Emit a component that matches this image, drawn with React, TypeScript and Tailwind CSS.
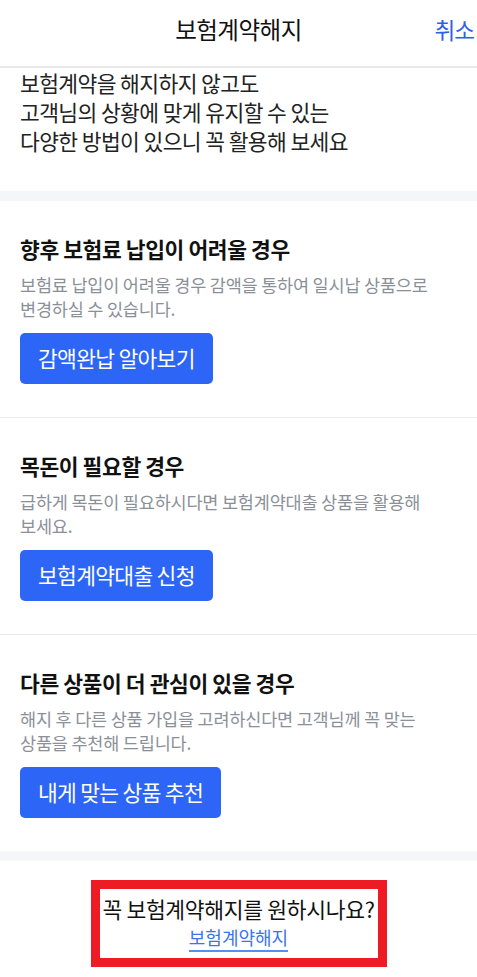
const font = { fontFamily: '"Noto Sans CJK KR", "Noto Sans", sans-serif' };

type Option = {
  title: string;
  lines: string[];
  button: string;
};

const options: Option[] = [
  {
    title: '향후 보험료 납입이 어려울 경우',
    lines: ['보험료 납입이 어려울 경우 감액을 통하여 일시납 상품으로', '변경하실 수 있습니다.'],
    button: '감액완납 알아보기',
  },
  {
    title: '목돈이 필요할 경우',
    lines: ['급하게 목돈이 필요하시다면 보험계약대출 상품을 활용해', '보세요.'],
    button: '보험계약대출 신청',
  },
  {
    title: '다른 상품이 더 관심이 있을 경우',
    lines: ['해지 후 다른 상품 가입을 고려하신다면 고객님께 꼭 맞는', '상품을 추천해 드립니다.'],
    button: '내게 맞는 상품 추천',
  },
];

function OptionCard({ option }: { option: Option }) {
  return (
    <section className="px-5 pt-[34px] pb-[33px]">
      <h2 className="text-[21.5px] leading-[28px] font-bold tracking-[-0.4px] text-[#111]">{option.title}</h2>
      <p className="mt-[10px] text-[17.5px] leading-[24px] tracking-[-0.2px] text-[#8b9098] whitespace-nowrap">
        {option.lines[0]}
        <br />
        {option.lines[1]}
      </p>
      <button className="mt-3 inline-flex h-[51px] items-center rounded-[5px] bg-[#2d66f6] px-[18px] text-[21.5px] tracking-[-0.7px] text-white">
        {option.button}
      </button>
    </section>
  );
}

export default function App() {
  return (
    <div className="min-h-[977px] w-[477px] bg-white" style={font}>
      {/* header */}
      <header className="grid h-[68px] grid-cols-[1fr_auto_1fr] items-start border-b-2 border-[#e9e9e9] pt-[13px]">
        <div />
        <h1 className="text-[23.5px] leading-[32px] tracking-[-0.5px] text-[#111]">보험계약해지</h1>
        <button className="justify-self-end pr-[3px] text-[22.5px] leading-[32px] tracking-[-1px] text-[#2d5fe8]">
          취소
        </button>
      </header>

      {/* intro */}
      <div className="px-5 pb-[36px] text-[21.5px] leading-[29px] tracking-[-0.6px] text-[#222]">
        <p>보험계약을 해지하지 않고도</p>
        <p>고객님의 상황에 맞게 유지할 수 있는</p>
        <p>다양한 방법이 있으니 꼭 활용해 보세요</p>
      </div>

      <div className="h-[10px] bg-[#f5f6f8]" />

      <div className="divide-y divide-[#ececec]">
        {options.map((o) => (
          <OptionCard key={o.button} option={o} />
        ))}
      </div>

      <div className="h-[10px] bg-[#f5f6f8]" />

      {/* bottom */}
      <div className="pt-[19px]">
        <div className="mx-auto flex w-[296px] flex-col items-center border-[9px] border-[#ed1c24] pt-[4px] pb-[6px]">
          <p className="text-[21.5px] leading-[31px] tracking-[-0.3px] text-[#111] whitespace-nowrap">
            꼭 보험계약해지를 원하시나요?
          </p>
          <a className="inline-block border-b-2 border-[#5b8cf0] text-[18px] leading-[26px] text-[#3a74ee]">
            보험계약해지
          </a>
        </div>
      </div>
    </div>
  );
}
